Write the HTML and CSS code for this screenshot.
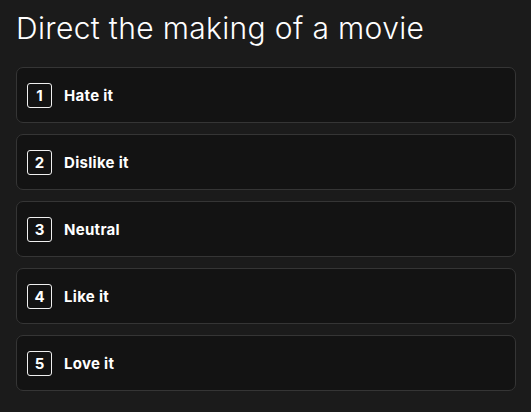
FILE: index.html
```html
<!DOCTYPE html>
<html lang="en">
<head>
<meta charset="utf-8">
<link rel="stylesheet" href="styles.css">
</head>
<body>
<h1 class="title">Direct the making of a movie</h1>
<div class="options">
  <div class="option"><span class="key">1</span><span class="label">Hate it</span></div>
  <div class="option"><span class="key">2</span><span class="label">Dislike it</span></div>
  <div class="option"><span class="key">3</span><span class="label">Neutral</span></div>
  <div class="option"><span class="key">4</span><span class="label">Like it</span></div>
  <div class="option"><span class="key">5</span><span class="label">Love it</span></div>
</div>
</body>
</html>
```
FILE: styles.css
```css
html, body {
  margin: 0;
  background: #1b1b1b;
}
body {
  padding: 10px 16px 0 16px;
  font-family: Inter, "Noto Sans", sans-serif;
  color: #ffffff;
}
.title {
  margin: 0 0 21px 0;
  font-size: 30px;
  font-weight: 300;
  line-height: 36px;
  letter-spacing: 0.35px;
}
.options {
  display: flex;
  flex-direction: column;
  gap: 11px;
  width: 500px;
}
.option {
  box-sizing: border-box;
  height: 56px;
  display: flex;
  align-items: center;
  gap: 12px;
  padding: 0 10px;
  background: #131313;
  border: 1px solid #353535;
  border-radius: 7px;
}
.key {
  box-sizing: border-box;
  width: 25px;
  height: 25px;
  display: flex;
  align-items: center;
  justify-content: center;
  border: 1px solid #f0f0f0;
  border-radius: 3px;
  font-size: 15px;
  font-weight: 700;
}
.label {
  font-size: 15px;
  font-weight: 700;
  letter-spacing: 0.3px;
}
```
